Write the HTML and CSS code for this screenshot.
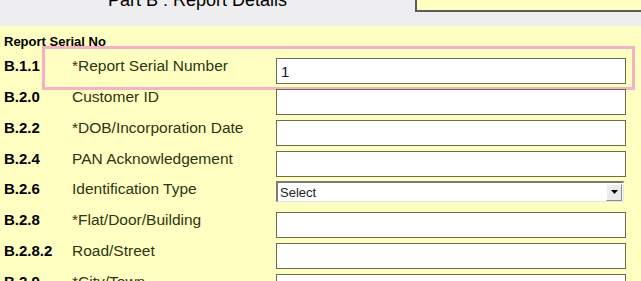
FILE: index.html
```html
<!DOCTYPE html>
<html lang="en">
<head>
    <meta charset="UTF-8">
    <title>Part B : Report Details</title>
    <link rel="stylesheet" href="styles.css">
</head>
<body>

    <div class="top-bar">
        <div class="tab-title">Part B : Report Details</div>
        <div class="tab-field"></div>
    </div>

    <div class="form">
        <div class="section-title">Report Serial No</div>

        <div class="row highlighted">
            <span class="code">B.1.1</span>
            <span class="label">*Report Serial Number</span>
            <input type="text" class="field" value="1">
        </div>
        <div class="row">
            <span class="code">B.2.0</span>
            <span class="label">Customer ID</span>
            <input type="text" class="field">
        </div>
        <div class="row">
            <span class="code">B.2.2</span>
            <span class="label">*DOB/Incorporation Date</span>
            <input type="text" class="field">
        </div>
        <div class="row">
            <span class="code">B.2.4</span>
            <span class="label">PAN Acknowledgement</span>
            <input type="text" class="field">
        </div>
        <div class="row">
            <span class="code">B.2.6</span>
            <span class="label">Identification Type</span>
            <div class="select">
                <span class="select-text">Select</span>
                <span class="select-btn">
                    <svg width="7" height="4" viewBox="0 0 7 4"><path d="M0 0H7L3.5 4Z" fill="#000"/></svg>
                </span>
            </div>
        </div>
        <div class="row">
            <span class="code">B.2.8</span>
            <span class="label">*Flat/Door/Building</span>
            <input type="text" class="field">
        </div>
        <div class="row">
            <span class="code">B.2.8.2</span>
            <span class="label">Road/Street</span>
            <input type="text" class="field">
        </div>
        <div class="row">
            <span class="code">B.2.9</span>
            <span class="label">*City/Town</span>
            <input type="text" class="field">
        </div>
    </div>

</body>
</html>
```

FILE: styles.css
```css
body {
    margin: 0;
    height: 281px;
    overflow: hidden;
    background: #ffffc2;
    font-family: "Liberation Sans", Arial, sans-serif;
}

.top-bar {
    display: flex;
    height: 26px;
    background: #eeeef0;
    overflow: hidden;
}

.tab-title {
    flex: 1;
    padding-left: 108px;
    margin-top: -9px;
    font-size: 18px;
    line-height: 18px;
    color: #000;
}

.tab-field {
    width: 224px;
    height: 10px;
    background: #ffffc2;
    border-left: 2px solid #5c5c5c;
    border-bottom: 2px solid #5c5c5c;
}

.form {
    padding: 8px 0 0 4px;
}

.section-title {
    font-size: 13px;
    line-height: 15px;
    font-weight: bold;
    margin-bottom: 9px;
}

.row {
    position: relative;
    display: flex;
    align-items: flex-start;
    height: 30.85px;
}

.code {
    width: 68px;
    margin-top: -1px;
    font-size: 15px;
    line-height: 18px;
    font-weight: bold;
    color: #000;
}

.label {
    width: 204px;
    margin-top: -1px;
    font-size: 15.5px;
    line-height: 18px;
    color: #2e3512;
}

.field {
    box-sizing: border-box;
    width: 350px;
    height: 26px;
    margin: 0;
    padding: 0 4px;
    border: 1px solid #6c6c4c;
    background: #fff;
    font-family: "Liberation Sans", Arial, sans-serif;
    font-size: 15px;
    color: #101040;
    outline: none;
}

.highlighted::after {
    content: "";
    position: absolute;
    left: 38px;
    top: -12px;
    width: 587px;
    height: 38px;
    border: 3px solid #f6b2c4;
    pointer-events: none;
}

.select {
    box-sizing: border-box;
    display: flex;
    align-items: center;
    justify-content: space-between;
    width: 348px;
    height: 21px;
    background: #fff;
    border-top: 2px solid #7a7a7a;
    border-left: 2px solid #7a7a7a;
    border-right: 1px solid #e4e4e4;
    border-bottom: 1px solid #e4e4e4;
}

.select-text {
    padding-left: 2px;
    font-size: 13px;
    color: #222;
}

.select-btn {
    box-sizing: border-box;
    display: flex;
    align-items: center;
    justify-content: center;
    width: 16px;
    height: 17px;
    margin-right: 1px;
    background: #ececec;
    border: 1px solid;
    border-color: #fff #8a8a8a #8a8a8a #fff;
}
```
